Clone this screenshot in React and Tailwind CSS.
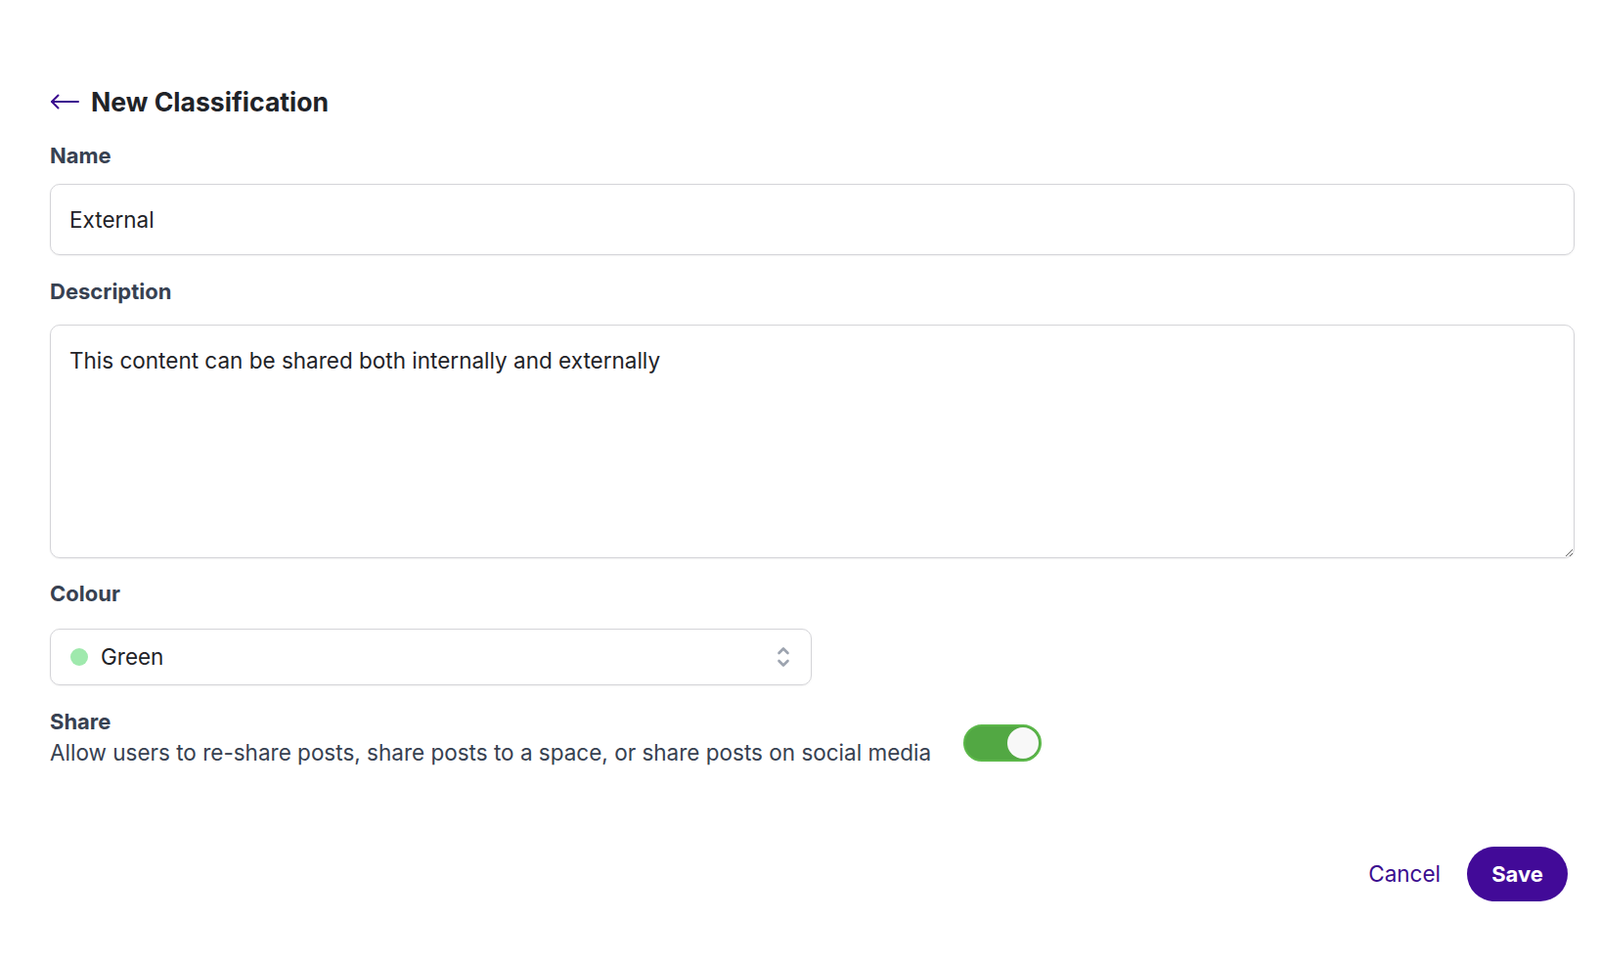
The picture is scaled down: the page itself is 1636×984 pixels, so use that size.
import { useState } from "react";

const BackArrow = () => (
  <svg width="30" height="16" viewBox="0 0 30 16" fill="none" stroke="#3b0d8f" strokeWidth="2" strokeLinecap="round" strokeLinejoin="round">
    <path d="M29 8H2" />
    <path d="M8.5 1.5L2 8l6.5 6.5" />
  </svg>
);

const UpDown = () => (
  <svg width="14" height="22" viewBox="0 0 14 22" fill="none" stroke="#9ca3af" strokeWidth="2.6" strokeLinecap="round" strokeLinejoin="round">
    <path d="M2.5 7L7 2.5L11.5 7" />
    <path d="M2.5 15L7 19.5L11.5 15" />
  </svg>
);

const Label = ({ children, className = "" }) => (
  <div className={`text-[22px] leading-[30px] font-bold text-[#374151] ${className}`}>{children}</div>
);

export default function App() {
  const [share, setShare] = useState(true);

  return (
    <div
      className="min-h-[984px] bg-white pl-[51px] pr-[26px] pt-[86px]"
      style={{ fontFamily: "Inter, 'Noto Sans', 'Liberation Sans', sans-serif" }}
    >
      {/* Header */}
      <div className="flex items-center gap-[12px] h-[36px]">
        <button className="flex items-center">
          <BackArrow />
        </button>
        <h1 className="text-[26.6px] leading-[36px] font-bold text-[#1f2328]">New Classification</h1>
      </div>

      {/* Name */}
      <Label className="mt-[22px]">Name</Label>
      <input
        readOnly
        defaultValue="External"
        className="mt-[14px] block w-full h-[73px] rounded-[10px] border border-[#d4d4d8] shadow-[0_1px_2px_rgba(0,0,0,0.05)] px-[19px] text-[22.5px] text-[#1f2328] outline-none"
      />

      {/* Description */}
      <Label className="mt-[22px]">Description</Label>
      <textarea
        readOnly
        defaultValue="This content can be shared both internally and externally"
        className="mt-[19px] block w-full h-[239px] rounded-[10px] border border-[#d4d4d8] shadow-[0_1px_2px_rgba(0,0,0,0.05)] px-[19px] pt-[21px] text-[22.5px] leading-[30px] text-[#1f2328] outline-none"
      />

      {/* Colour */}
      <Label className="mt-[21px]">Colour</Label>
      <div className="mt-[21px] w-[779px] h-[58px] rounded-[10px] border border-[#d4d4d8] shadow-[0_1px_2px_rgba(0,0,0,0.05)] flex items-center pl-[20px] pr-[21px]">
        <span className="w-[18px] h-[18px] rounded-full bg-[#9fe9ad]" />
        <span className="ml-[13px] text-[22.5px] text-[#1f2328] flex-1">Green</span>
        <UpDown />
      </div>

      {/* Share */}
      <div className="mt-[22px] flex items-center">
        <div>
          <Label>Share</Label>
          <div className="mt-[2px] text-[22.5px] leading-[30px] text-[#374151]">
            Allow users to re-share posts, share posts to a space, or share posts on social media
          </div>
        </div>
        <button
          onClick={() => setShare(!share)}
          className={`ml-[33px] mt-[12px] w-[80px] h-[38px] rounded-full border-2 flex items-center px-[1px] ${
            share ? "bg-[#52a843] border-[#5cb84a] justify-end" : "bg-gray-300 border-gray-300 justify-start"
          }`}
        >
          <span className="w-[32px] h-[32px] rounded-full bg-[#f8f8f8]" />
        </button>
      </div>

      {/* Actions */}
      <div className="mt-[81px] flex items-center justify-end gap-[27px] pr-[7px]">
        <button className="text-[22.5px] text-[#3b0d8f]">Cancel</button>
        <button className="w-[103px] h-[56px] rounded-full bg-[#420a98] text-white text-[22px] font-bold">Save</button>
      </div>
    </div>
  );
}
